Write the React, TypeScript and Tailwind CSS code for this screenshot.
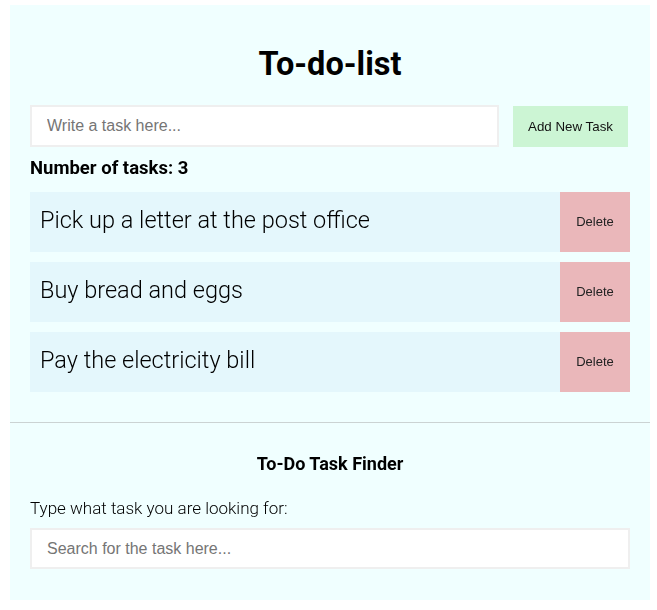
import React from "react";

const tasks = [
  "Pick up a letter at the post office",
  "Buy bread and eggs",
  "Pay the electricity bill",
];

export default function App() {
  return (
    <div className="min-h-screen bg-white pt-[5px]" style={{ fontFamily: "Roboto, 'Noto Sans', sans-serif" }}>
      <div className="ml-[10px] w-[640px] bg-[#f0ffff]">
        <div className="px-[20px] pt-[39px] pb-[20px]">
          <h1 className="mb-[21px] text-center text-[32.5px] font-bold leading-[40px] text-black">To-do-list</h1>
          <div className="flex items-start">
            <input
              type="text"
              autoFocus
              placeholder="Write a task here..."
              className="h-[42px] w-[469px] border-2 border-[#efefef] bg-white px-[15px] text-[16px] text-black caret-black outline-none placeholder:text-[#757575]"
              style={{ fontFamily: "'Liberation Sans', Arial, sans-serif" }}
            />
            <button
              className="ml-[14px] mt-[1px] h-[41px] w-[115px] bg-[#ccf5d4] text-[13.33px] text-[#111]"
              style={{ fontFamily: "'Liberation Sans', Arial, sans-serif" }}
            >
              Add New Task
            </button>
          </div>
          <p className="mt-[9px] mb-[12px] text-[18.5px] font-bold leading-[24px] text-black">Number of tasks: 3</p>
          <ul className="flex flex-col gap-[10px]">
            {tasks.map((t) => (
              <li key={t} className="flex h-[60px]">
                <div className="flex flex-1 items-center bg-[#e4f7fc] px-[10px] pb-[3px] text-[23.5px] font-light text-black">
                  {t}
                </div>
                <button
                  className="w-[70px] bg-[#eab7ba] text-[13px] text-[#222]"
                  style={{ fontFamily: "'Liberation Sans', Arial, sans-serif" }}
                >
                  Delete
                </button>
              </li>
            ))}
          </ul>
          <div className="h-[10px]" />
        </div>
        <div className="h-px bg-[#cbd3d3]" />
        <div className="px-[20px] pt-[29px] pb-[31px]">
          <h2 className="text-center text-[18px] font-bold leading-[24px] text-black">To-Do Task Finder</h2>
          <p className="mt-[20px] text-[17px] font-light leading-[24px] text-black">Type what task you are looking for:</p>
          <input
            type="text"
            placeholder="Search for the task here..."
            className="mt-[8px] block h-[41px] w-full border-2 border-[#efefef] bg-white px-[15px] text-[16px] text-black outline-none placeholder:text-[#757575]"
            style={{ fontFamily: "'Liberation Sans', Arial, sans-serif" }}
          />
        </div>
      </div>
    </div>
  );
}
